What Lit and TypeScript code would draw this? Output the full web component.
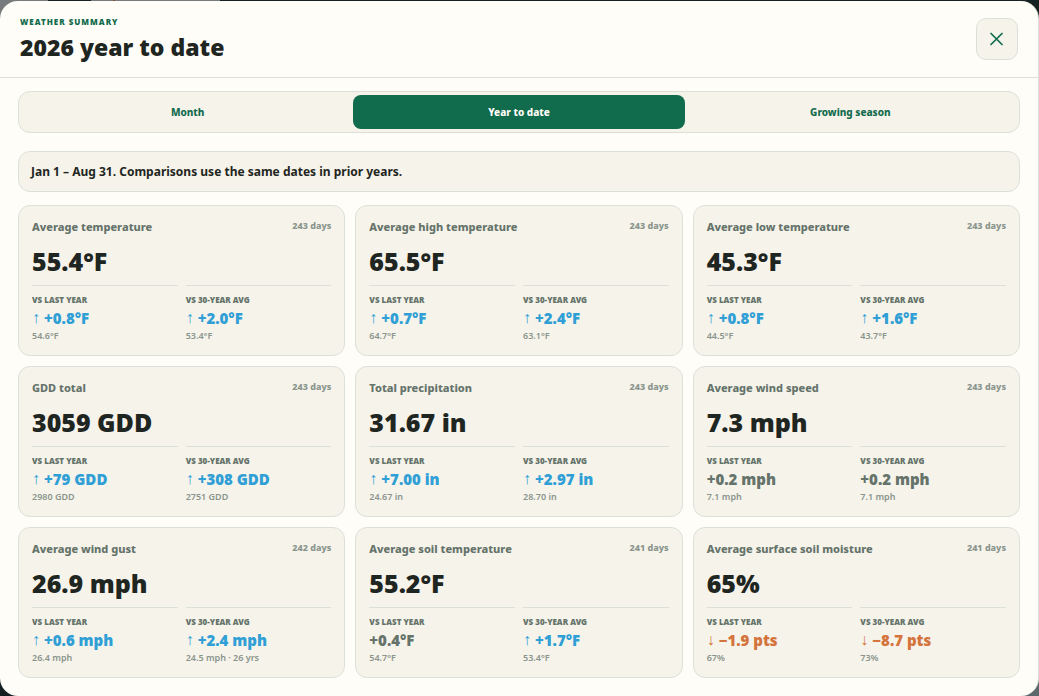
import { LitElement, html, css, svg } from "lit";
import { customElement, property, state } from "lit/decorators.js";
import { classMap } from "lit/directives/class-map.js";

type Trend = "up" | "down" | "flat";

interface Comparison {
  trend: Trend;
  delta: string;
  base: string;
}

interface Metric {
  name: string;
  days: number;
  value: string;
  lastYear: Comparison;
  average: Comparison;
}

const compare = (trend: Trend, delta: string, base: string): Comparison => ({ trend, delta, base });

const METRICS: Metric[] = [
  { name: "Average temperature", days: 243, value: "55.4°F", lastYear: compare("up", "+0.8°F", "54.6°F"), average: compare("up", "+2.0°F", "53.4°F") },
  { name: "Average high temperature", days: 243, value: "65.5°F", lastYear: compare("up", "+0.7°F", "64.7°F"), average: compare("up", "+2.4°F", "63.1°F") },
  { name: "Average low temperature", days: 243, value: "45.3°F", lastYear: compare("up", "+0.8°F", "44.5°F"), average: compare("up", "+1.6°F", "43.7°F") },
  { name: "GDD total", days: 243, value: "3059 GDD", lastYear: compare("up", "+79 GDD", "2980 GDD"), average: compare("up", "+308 GDD", "2751 GDD") },
  { name: "Total precipitation", days: 243, value: "31.67 in", lastYear: compare("up", "+7.00 in", "24.67 in"), average: compare("up", "+2.97 in", "28.70 in") },
  { name: "Average wind speed", days: 243, value: "7.3 mph", lastYear: compare("flat", "+0.2 mph", "7.1 mph"), average: compare("flat", "+0.2 mph", "7.1 mph") },
  { name: "Average wind gust", days: 242, value: "26.9 mph", lastYear: compare("up", "+0.6 mph", "26.4 mph"), average: compare("up", "+2.4 mph", "24.5 mph · 26 yrs") },
  { name: "Average soil temperature", days: 241, value: "55.2°F", lastYear: compare("flat", "+0.4°F", "54.7°F"), average: compare("up", "+1.7°F", "53.4°F") },
  { name: "Average surface soil moisture", days: 241, value: "65%", lastYear: compare("down", "−1.9 pts", "67%"), average: compare("down", "−8.7 pts", "73%") },
];

const ARROWS: Record<Trend, string> = { up: "↑", down: "↓", flat: "" };

@customElement("metric-card")
export class MetricCard extends LitElement {
  @property({ attribute: false }) metric!: Metric;

  static styles = css`
    :host {
      display: block;
      padding: 13px;
      border: 1px solid #dbe1d8;
      border-radius: 12px;
      background: #f6f3eb;
    }
    .head {
      display: flex;
      justify-content: space-between;
      gap: 8px;
    }
    .name {
      margin: 0;
      font-size: 11px;
      line-height: 16px;
      font-weight: 800;
      color: #65736a;
    }
    .days {
      font-size: 9px;
      line-height: 14px;
      font-weight: 800;
      color: #8a958c;
      white-space: nowrap;
    }
    .value {
      margin: 8px 0 6px;
      font-size: 25px;
      line-height: 36px;
      font-weight: 900;
      color: #1f2621;
    }
    .pair {
      display: grid;
      grid-template-columns: 1fr 1fr;
      gap: 8px;
      margin: 0;
    }
    .item {
      padding-top: 8px;
      border-top: 1px solid #dbe1d8;
    }
    .label {
      font-size: 8px;
      line-height: 12px;
      font-weight: 900;
      text-transform: uppercase;
      color: #65736a;
    }
    .delta,
    .base {
      margin: 0;
    }
    .delta {
      display: flex;
      gap: 4px;
      font-size: 15px;
      line-height: 24px;
      font-weight: 900;
    }
    .arrow {
      font-family: "Liberation Sans", sans-serif;
      font-size: 16px;
      font-weight: 400;
    }
    .up {
      color: #2f9fd6;
    }
    .down {
      color: #d4743c;
    }
    .flat {
      color: #65736a;
    }
    .base {
      font-size: 9px;
      line-height: 12px;
      font-weight: 600;
      color: #8a958c;
    }
  `;

  private comparison(label: string, c: Comparison) {
    return html`
      <div class="item">
        <dt class="label">${label}</dt>
        <dd class="delta ${c.trend}">
          ${ARROWS[c.trend] ? html`<span class="arrow">${ARROWS[c.trend]}</span>` : ""}<span>${c.delta}</span>
        </dd>
        <dd class="base">${c.base}</dd>
      </div>
    `;
  }

  render() {
    const m = this.metric;
    return html`
      <div class="head">
        <h2 class="name">${m.name}</h2>
        <span class="days">${m.days} days</span>
      </div>
      <div class="value">${m.value}</div>
      <dl class="pair">
        ${this.comparison("vs last year", m.lastYear)}
        ${this.comparison("vs 30-year avg", m.average)}
      </dl>
    `;
  }
}

const PERIODS = ["Month", "Year to date", "Growing season"];

@customElement("app-root")
export class AppRoot extends LitElement {
  @state() private period = "Year to date";

  static styles = css`
    :host {
      display: block;
      box-sizing: border-box;
      min-height: 100vh;
      padding-top: 1px;
      font-family: "Noto Sans", "Open Sans", sans-serif;
      background:
        linear-gradient(90deg, #777b7b 48px, #162122 48px 91px, #777b7b 91px 113px, #8a4a3c 113px 115px, #777b7b 115px 220px, #162122 220px) top / 100% 30px no-repeat,
        linear-gradient(90deg, #131f20 50%, #5c686b 50%);
    }
    .dialog {
      display: flex;
      flex-direction: column;
      box-sizing: border-box;
      min-height: calc(100vh - 1px);
      border-right: 1px solid #dbe1d8;
      border-radius: 18px;
      background: #fffdf8;
      overflow: hidden;
    }
    .header {
      display: flex;
      align-items: center;
      justify-content: space-between;
      padding: 14px 20px;
      border-bottom: 1px solid #dbe1d8;
    }
    .eyebrow {
      margin: 0;
      font-size: 8px;
      line-height: 14px;
      font-weight: 900;
      letter-spacing: 1px;
      text-transform: uppercase;
      color: #116b4d;
    }
    .title {
      margin: 2px 0 0;
      font-size: 23px;
      line-height: 32px;
      font-weight: 900;
      color: #1f2621;
    }
    .close {
      display: grid;
      place-items: center;
      width: 42px;
      height: 42px;
      padding: 0;
      border: 1px solid #dbe1d8;
      border-radius: 10px;
      background: #f6f3eb;
      color: #116b4d;
    }
    .body {
      display: flex;
      flex-direction: column;
      padding: 13px 18px 18px;
    }
    .tabs {
      display: grid;
      grid-template-columns: repeat(3, 1fr);
      margin-bottom: 18px;
      padding: 3px;
      border: 1px solid #dbe1d8;
      border-radius: 12px;
      background: #f6f3eb;
    }
    .tab {
      height: 34px;
      padding: 0;
      border: 0;
      border-radius: 8px;
      background: transparent;
      font-family: inherit;
      font-size: 10px;
      font-weight: 800;
      color: #116b4d;
    }
    .tab.active {
      background: #116b4d;
      color: #fffdf8;
    }
    .note {
      margin: 0 0 13px;
      padding: 11px 12px 10px;
      border: 1px solid #dbe1d8;
      border-radius: 12px;
      background: #f6f3eb;
      font-size: 12px;
      line-height: 18px;
      font-weight: 700;
      color: #1f2621;
    }
    .grid {
      display: grid;
      grid-template-columns: repeat(3, 1fr);
      gap: 10px;
    }
  `;

  render() {
    return html`
      <section class="dialog" role="dialog" aria-labelledby="title">
        <header class="header">
          <div>
            <p class="eyebrow">Weather summary</p>
            <h1 class="title" id="title">2026 year to date</h1>
          </div>
          <button class="close" type="button" aria-label="Close">
            <svg width="14" height="14" viewBox="0 0 14 14" fill="none" stroke="currentColor" stroke-width="1.7" stroke-linecap="round">
              ${svg`<path d="M1 1.5 12 12.5M12 1.5 1 12.5"/>`}
            </svg>
          </button>
        </header>
        <div class="body">
          <div class="tabs" role="tablist">
            ${PERIODS.map(
              (p) => html`<button
                type="button"
                role="tab"
                class=${classMap({ tab: true, active: p === this.period })}
                aria-selected=${p === this.period}
                @click=${() => (this.period = p)}
              >${p}</button>`
            )}
          </div>
          <p class="note">Jan 1 – Aug 31. Comparisons use the same dates in prior years.</p>
          <div class="grid">
            ${METRICS.map((m) => html`<metric-card .metric=${m}></metric-card>`)}
          </div>
        </div>
      </section>
    `;
  }
}
